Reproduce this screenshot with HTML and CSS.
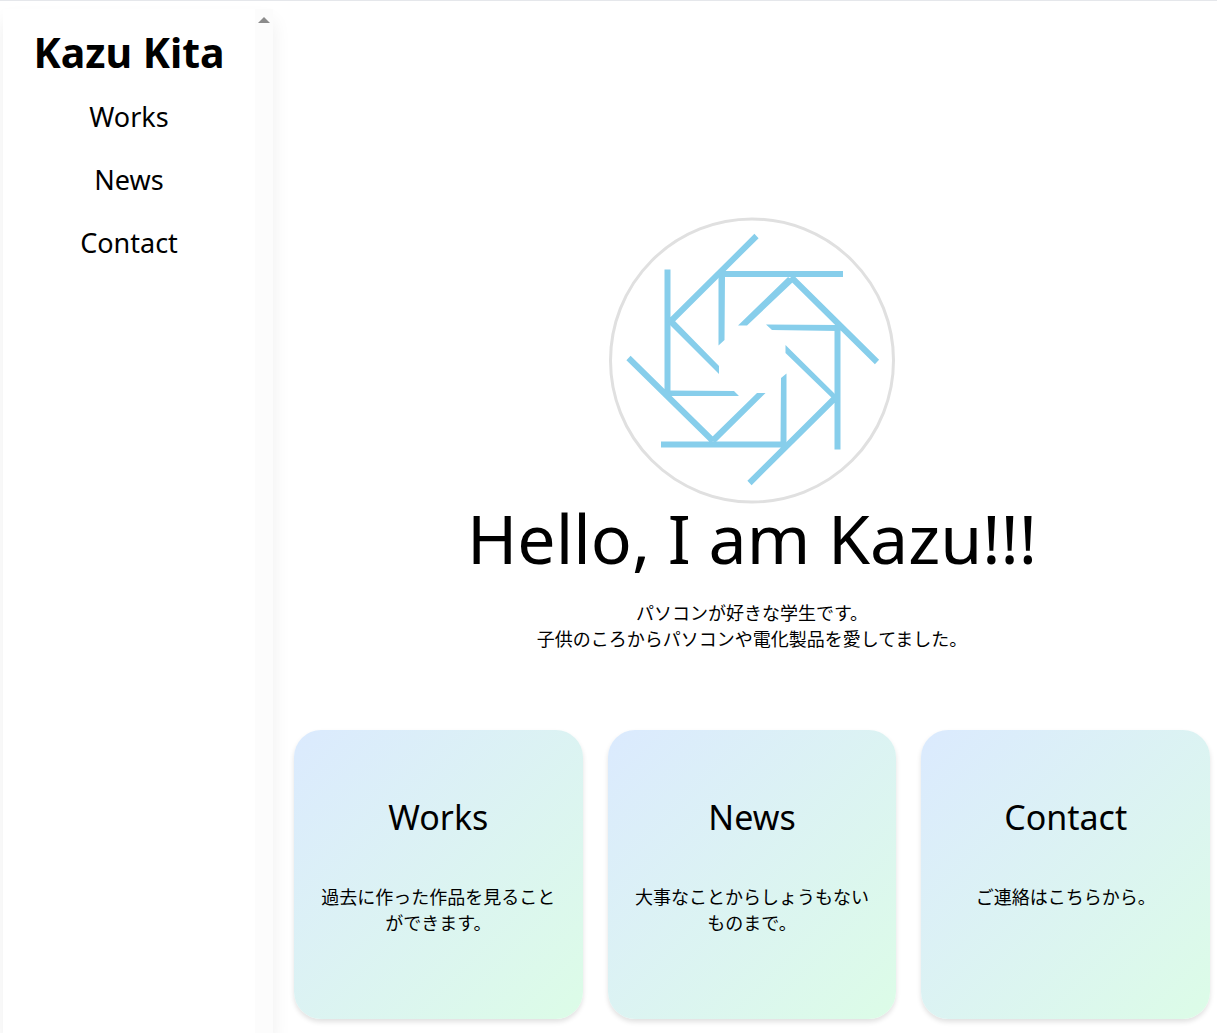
FILE: index.html
```html
<!DOCTYPE html>
<html lang="ja">
<head>
<meta charset="utf-8">
<meta name="viewport" content="width=device-width, initial-scale=1">
<title>Kazu Kita</title>
<link rel="stylesheet" href="styles.css">
</head>
<body>
<div class="page">
  <aside class="sidebar">
    <div class="sidebar-content">
      <a class="brand" href="#">Kazu Kita</a>
      <nav class="menu">
        <a href="#works">Works</a>
        <a href="#news">News</a>
        <a href="#contact">Contact</a>
      </nav>
    </div>
    <div class="scroll-track" aria-hidden="true">
      <svg width="12" height="6" viewBox="0 0 12 6"><path d="M0 6 6 0l6 6z" fill="#8b8b8b"/></svg>
    </div>
  </aside>
  <main class="main">
    <section class="hero">
      <svg class="logo" viewBox="609 217 286 287" role="img" aria-label="Kazu Kita">
        <circle cx="752" cy="360.500" r="141.500" fill="#fff" stroke="#e0e0e0" stroke-width="3"/>
        <g fill="none" stroke="#87ceeb" stroke-width="6">
          <path d="M667.500 269.500V393M756.500 236 670 322M720 274H843M791 277l86 85M837.500 325V449.500M835 398l-85.500 85M661 444.500H785M713 441l-84.500-83"/>
        </g>
        <g fill="#87ceeb">
          <path d="M672 318 719 366V374L668 323zM718.500 276H725L724.500 340 718.500 345.500zM788 277 738 325.500H747L794 281zM766 324.500 838 325V331L772 330z"/>
          <path d="M785.500 345 835 394V401L785.500 353zM786.500 373.500V444H780.500L781 378zM765.500 393H757L710 439 715 443zM667 390.500 734 391 739 396H667z"/>
        </g>
      </svg>
      <h1>Hello, I am Kazu!!!</h1>
      <p>パソコンが好きな学生です。<br>子供のころからパソコンや電化製品を愛してました。</p>
    </section>
    <section class="cards">
      <a class="card" id="works" href="#works">
        <h2>Works</h2>
        <p>過去に作った作品を見ることができます。</p>
      </a>
      <a class="card" id="news" href="#news">
        <h2>News</h2>
        <p>大事なことからしょうもないものまで。</p>
      </a>
      <a class="card" id="contact" href="#contact">
        <h2>Contact</h2>
        <p>ご連絡はこちらから。</p>
      </a>
    </section>
  </main>
</div>
</body>
</html>
```
FILE: styles.css
```css
* {
  box-sizing: border-box;
}

body {
  margin: 0;
  background: #fff;
  color: #000;
  font-family: "Noto Sans", "Noto Sans CJK JP", sans-serif;
  font-size: 18px;
  line-height: 26px;
}

a {
  color: inherit;
  text-decoration: none;
}

h1,
h2,
p {
  margin: 0;
  font-weight: 400;
}

.page {
  display: flex;
  min-height: 100vh;
  padding-left: 3px;
  border-top: 1px solid #e5e7eb;
  overflow: hidden;
}

.sidebar {
  display: flex;
  flex: 0 0 270px;
  margin-top: 8px;
  box-shadow: 0 12px 18px rgba(0, 0, 0, 0.07);
}

.sidebar-content {
  flex: 1;
  padding-top: 19px;
  background: #fff;
  text-align: center;
}

.brand {
  display: block;
  font-size: 41px;
  font-weight: 700;
  line-height: 48px;
}

.menu {
  display: grid;
  gap: 27px;
  margin-top: 23px;
  font-size: 27px;
  line-height: 36px;
}

.scroll-track {
  display: flex;
  flex: 0 0 18px;
  justify-content: center;
  padding-top: 8px;
  background: #fcfcfc;
}

.main {
  flex: 1;
  min-width: 0;
  padding: 216px 7px 14px 21px;
}

.hero {
  display: flex;
  flex-direction: column;
  align-items: center;
  text-align: center;
}

.logo {
  width: 286px;
  height: 287px;
}

.hero h1 {
  font-size: 68px;
  line-height: 68px;
}

.hero p {
  margin-top: 28px;
}

.cards {
  display: grid;
  grid-template-columns: repeat(3, 1fr);
  gap: 25px;
  margin-top: 78px;
}

.card {
  aspect-ratio: 1;
  padding: 67px 27px 27px;
  border-radius: 27px;
  background: linear-gradient(to bottom right, #dbeafe, #dcfce7);
  box-shadow: 0 3px 5px rgba(0, 0, 0, 0.12);
  text-align: center;
}

.card h2 {
  font-size: 34px;
  line-height: 40px;
}

.card p {
  margin-top: 47px;
}
```
